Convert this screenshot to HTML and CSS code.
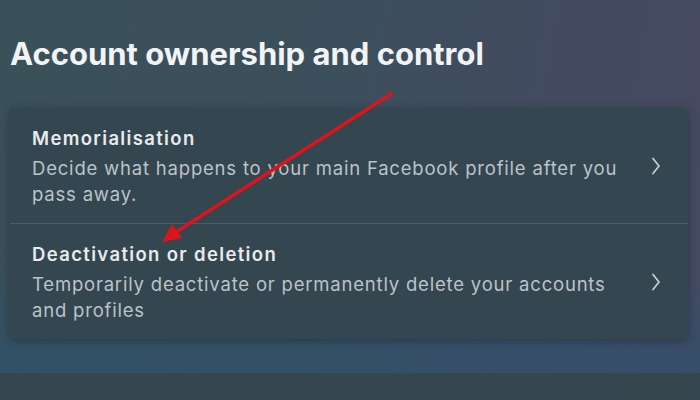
FILE: index.html
```html
<!DOCTYPE html>
<html lang="en">
<head>
<meta charset="utf-8">
<title>Account ownership and control</title>
<link rel="stylesheet" href="styles.css">
</head>
<body>
<div class="page">
  <h1 class="heading">Account ownership and control</h1>
  <div class="card">
    <div class="row">
      <div class="text">
        <div class="title">Memorialisation</div>
        <div class="desc">Decide what happens to your main Facebook profile after you pass away.</div>
      </div>
      <div class="chev">
        <svg width="10" height="18" viewBox="0 0 10 18"><path d="M2 1.5 L8 9 L2 16.5" fill="none" stroke="#c9cdd1" stroke-width="1.8" stroke-linecap="round" stroke-linejoin="round"/></svg>
      </div>
    </div>
    <div class="row">
      <div class="text">
        <div class="title">Deactivation or deletion</div>
        <div class="desc">Temporarily deactivate or permanently delete your accounts and profiles</div>
      </div>
      <div class="chev">
        <svg width="10" height="18" viewBox="0 0 10 18"><path d="M2 1.5 L8 9 L2 16.5" fill="none" stroke="#c9cdd1" stroke-width="1.8" stroke-linecap="round" stroke-linejoin="round"/></svg>
      </div>
    </div>
  </div>
  <svg class="arrow" width="700" height="400" viewBox="0 0 700 400">
    <line x1="391" y1="94" x2="176" y2="232" stroke="#dc141c" stroke-width="3.6" stroke-linecap="round"/>
    <polygon points="162,242 172,224 182,238" fill="#dc141c"/>
  </svg>
</div>
<div class="footer"></div>
</body>
</html>
```
FILE: styles.css
```css
html, body {
  margin: 0;
  padding: 0;
}
body {
  width: 700px;
  height: 400px;
  overflow: hidden;
  font-family: Inter, "Noto Sans", sans-serif;
  background: #36474f;
}
.page {
  position: relative;
  height: 373px;
  box-sizing: border-box;
  padding: 35px 12px 0 10px;
  background:
    linear-gradient(180deg, rgba(40, 80, 110, 0) 0%, rgba(40, 80, 110, 0) 72%, rgba(44, 82, 112, 0.6) 100%),
    linear-gradient(100deg, #3a5159 0%, #3c4f5c 45%, #434b60 75%, #464a62 100%);
}
.heading {
  margin: 0 0 35px 0;
  font-size: 31px;
  line-height: 38px;
  font-weight: 700;
  color: #f2f3f5;
}
.card {
  background: #34464f;
  border-radius: 4px;
  box-shadow: 0 2px 8px rgba(20, 30, 40, 0.45);
  width: 678px;
}
.row {
  display: flex;
  align-items: center;
  padding: 16px 20px 16px 22px;
}
.row + .row {
  border-top: 1px solid #4a5c66;
}
.text {
  width: 598px;
}
.title {
  font-size: 18.5px;
  line-height: 28px;
  font-weight: 600;
  letter-spacing: 1.35px;
  color: #e8eaed;
  margin-bottom: 3px;
}
.desc {
  font-size: 18.5px;
  line-height: 26px;
  letter-spacing: 0.8px;
  color: #bcc3c9;
}
.chev {
  width: 24px;
  margin-left: 14px;
  display: flex;
  justify-content: center;
}
.arrow {
  position: absolute;
  left: 0;
  top: 0;
  pointer-events: none;
  filter: blur(0.6px);
}
.footer {
  height: 27px;
  background: #36474f;
}
```
